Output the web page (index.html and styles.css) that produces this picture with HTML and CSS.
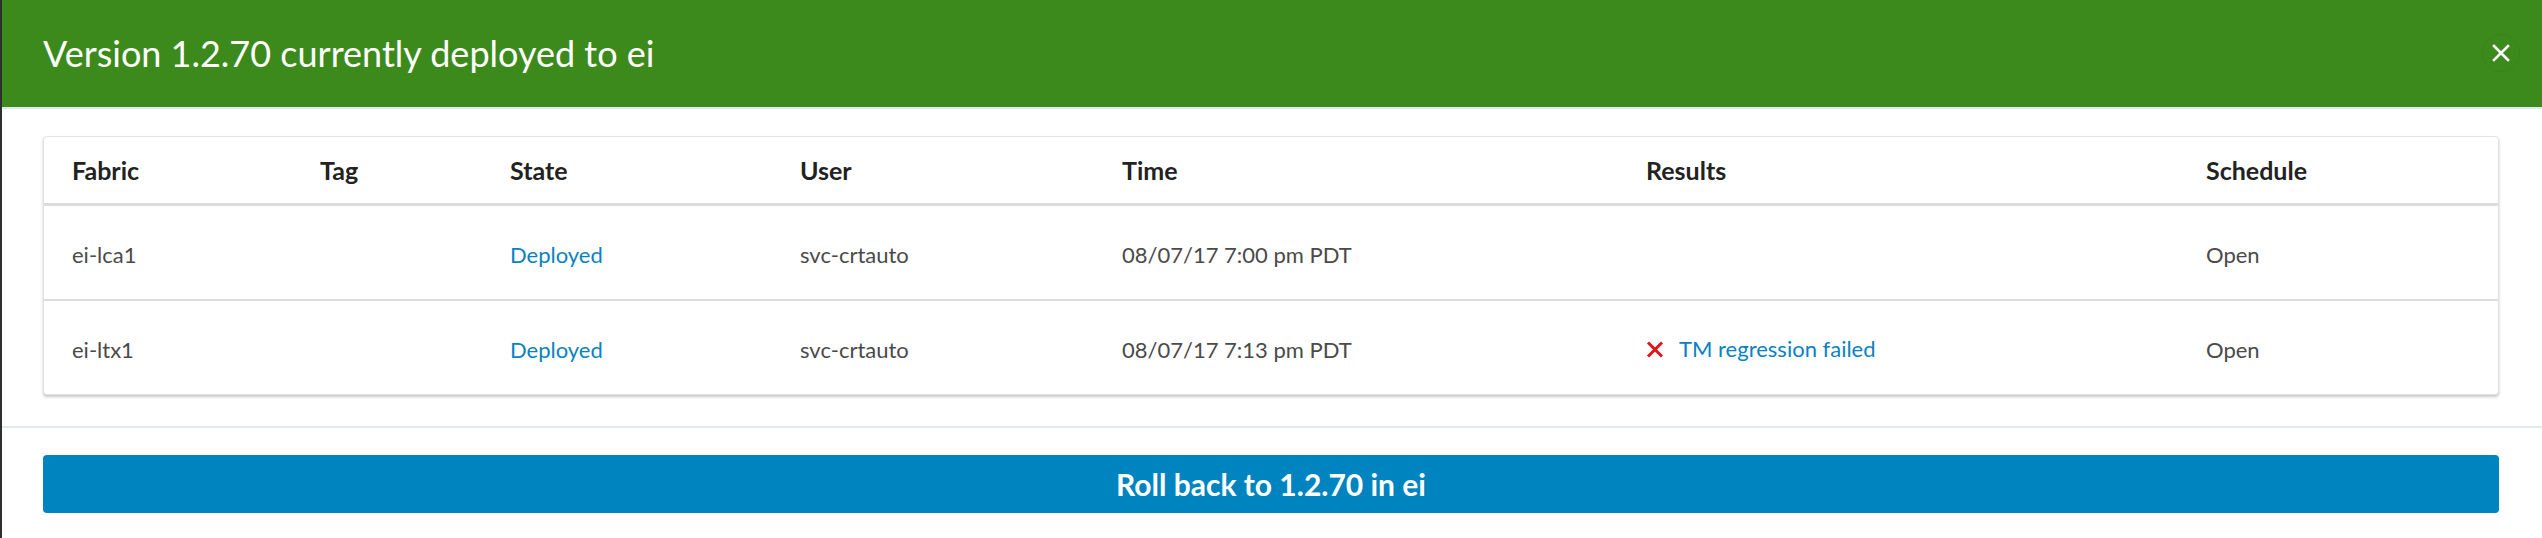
FILE: index.html
```html
<!DOCTYPE html>
<html lang="en">
<head>
<meta charset="utf-8">
<title>Deployment</title>
<link rel="stylesheet" href="styles.css">
</head>
<body>
<div class="modal">
  <header class="modal-header">
    <h1 class="modal-title">Version 1.2.70 currently deployed to ei</h1>
    <button class="close-btn" aria-label="Close">
      <svg width="18" height="18" viewBox="0 0 18 18"><path d="M2 2 L16 16 M16 2 L2 16" stroke="#fff" stroke-width="2.6" stroke-linecap="square"/></svg>
    </button>
  </header>
  <section class="modal-body">
    <div class="card">
      <table class="fabric-table">
        <colgroup>
          <col class="c-fabric"><col class="c-tag"><col class="c-state"><col class="c-user"><col class="c-time"><col class="c-results"><col class="c-schedule">
        </colgroup>
        <thead>
          <tr><th>Fabric</th><th>Tag</th><th>State</th><th>User</th><th>Time</th><th>Results</th><th>Schedule</th></tr>
        </thead>
        <tbody>
          <tr>
            <td>ei-lca1</td><td></td><td><a class="link">Deployed</a></td><td>svc-crtauto</td><td>08/07/17 7:00 pm PDT</td><td></td><td>Open</td>
          </tr>
          <tr>
            <td>ei-ltx1</td><td></td><td><a class="link">Deployed</a></td><td>svc-crtauto</td><td>08/07/17 7:13 pm PDT</td>
            <td><span class="result"><svg class="fail-icon" width="18" height="17" viewBox="0 0 18 17"><path d="M2 1.5 L16 15.5 M16 1.5 L2 15.5" stroke="#e3141c" stroke-width="3"/></svg><a class="link">TM regression failed</a></span></td>
            <td>Open</td>
          </tr>
        </tbody>
      </table>
    </div>
  </section>
  <footer class="modal-footer">
    <button class="primary-btn">Roll back to 1.2.70 in ei</button>
  </footer>
</div>
</body>
</html>
```
FILE: styles.css
```css
html, body {
  margin: 0;
  padding: 0;
  background: #fff;
}
body {
  font-family: "Lato", "Source Sans Pro", "Open Sans", sans-serif;
  color: #444;
}
.modal {
  border-left: 2px solid #2e2e2e;
  min-height: 538px;
  box-sizing: border-box;
}
.modal-header {
  height: 107px;
  background: #3c8a1b;
  border-bottom: 2px solid #e3e8eb;
  display: flex;
  align-items: center;
  justify-content: space-between;
  padding: 0 22px 0 41px;
}
.modal-title {
  margin: 0;
  font-size: 36px;
  font-weight: 400;
  color: #fff;
  letter-spacing: 0;
  padding-bottom: 2px;
}
.close-btn {
  width: 38px;
  height: 38px;
  border-radius: 50%;
  border: 1px solid rgba(0, 0, 0, 0.04);
  background: transparent;
  display: flex;
  align-items: center;
  justify-content: center;
  padding: 0;
  margin-top: -2px;
  cursor: pointer;
}
.modal-body {
  padding: 27px 43px 31px 41px;
  border-bottom: 2px solid #e3e8eb;
}
.card {
  border: 1px solid #e2e2e2;
  border-radius: 4px;
  box-shadow: 0 2px 3px rgba(0, 0, 0, 0.22);
  background: #fff;
  overflow: hidden;
}
.fabric-table {
  width: 100%;
  border-collapse: collapse;
  table-layout: fixed;
}
.c-fabric { width: 248px; }
.c-tag { width: 190px; }
.c-state { width: 290px; }
.c-user { width: 322px; }
.c-time { width: 524px; }
.c-results { width: 560px; }
.fabric-table th {
  height: 66px;
  padding: 0 0 0 28px;
  text-align: left;
  font-size: 25px;
  font-weight: 700;
  color: #222;
  border-bottom: 3px solid #dcdcdc;
  vertical-align: middle;
}
.fabric-table td {
  height: 90px;
  padding: 3px 0 0 28px;
  font-size: 22px;
  color: #4a4a4a;
  vertical-align: middle;
  white-space: nowrap;
}
.fabric-table tbody tr + tr td {
  border-top: 2px solid #dcdcdc;
}
.link {
  color: #0a82c0;
  text-decoration: none;
}
.result {
  display: inline-flex;
  align-items: center;
  gap: 15px;
}
.fail-icon {
  display: block;
  margin-top: 1px;
}
.modal-footer {
  padding: 27px 43px 25px 41px;
}
.primary-btn {
  display: block;
  width: 100%;
  height: 58px;
  border: none;
  border-radius: 4px;
  background: #0084bf;
  color: #fff;
  font-family: "Lato", "Source Sans Pro", sans-serif;
  font-size: 30px;
  font-weight: 700;
  cursor: pointer;
}
```
